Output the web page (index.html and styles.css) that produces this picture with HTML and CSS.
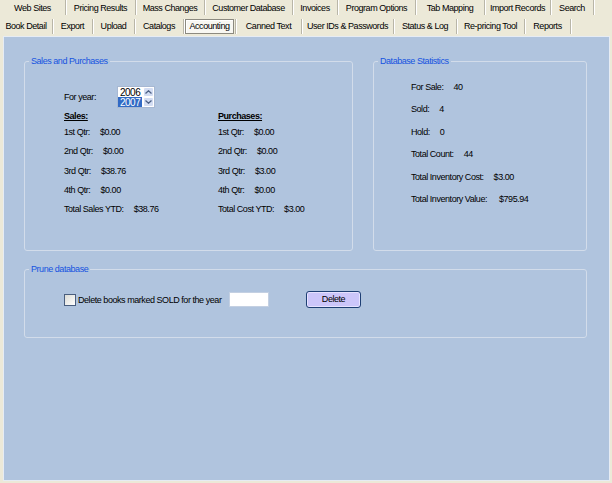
FILE: index.html
```html
<!DOCTYPE html>
<html>
<head>
<meta charset="utf-8">
<link rel="stylesheet" href="styles.css">
</head>
<body>
<div class="app">
  <div class="tabs">
    <div class="tabrow row1">
      <div class="tab w66">Web Sites</div>
      <div class="tab w70">Pricing Results</div>
      <div class="tab w69">Mass Changes</div>
      <div class="tab w88">Customer Database</div>
      <div class="tab w45">Invoices</div>
      <div class="tab w78">Program Options</div>
      <div class="tab w69">Tab Mapping</div>
      <div class="tab w66">Import Records</div>
      <div class="tab w43">Search</div>
    </div>
    <div class="tabrow row2">
      <div class="tab w53">Book Detail</div>
      <div class="tab w40">Export</div>
      <div class="tab w42">Upload</div>
      <div class="tab w49">Catalogs</div>
      <div class="tab w52 selected"><span class="selbox">Accounting</span></div>
      <div class="tab w66">Canned Text</div>
      <div class="tab w92">User IDs &amp; Passwords</div>
      <div class="tab w63">Status &amp; Log</div>
      <div class="tab w68">Re-pricing Tool</div>
      <div class="tab w46">Reports</div>
    </div>
  </div>
  <div class="panel">
    <div class="toprow">
      <fieldset class="group sales">
        <legend>Sales and Purchases</legend>
        <div class="inner sales-inner">
          <div class="yearrow">
            <span class="yearlabel">For year:</span>
            <div class="spin">
              <div class="spinlist">
                <div class="item">2006</div>
                <div class="item sel">2007</div>
              </div>
              <div class="spinbtns">
                <div class="sbtn"><svg width="7" height="4" viewBox="0 0 7 4"><path d="M0.5 3.5 L3.5 0.8 L6.5 3.5" fill="none" stroke="#4d6185" stroke-width="1.3"/></svg></div>
                <div class="sbtn"><svg width="7" height="4" viewBox="0 0 7 4"><path d="M0.5 0.5 L3.5 3.2 L6.5 0.5" fill="none" stroke="#4d6185" stroke-width="1.3"/></svg></div>
              </div>
            </div>
          </div>
          <div class="cols">
            <div class="col">
              <div class="head">Sales:</div>
              <div class="line">1st Qtr:<span class="val">$0.00</span></div>
              <div class="line">2nd Qtr:<span class="val">$0.00</span></div>
              <div class="line">3rd Qtr:<span class="val">$38.76</span></div>
              <div class="line">4th Qtr:<span class="val">$0.00</span></div>
              <div class="line">Total Sales YTD:<span class="val">$38.76</span></div>
            </div>
            <div class="col">
              <div class="head">Purchases:</div>
              <div class="line">1st Qtr:<span class="val">$0.00</span></div>
              <div class="line">2nd Qtr:<span class="val">$0.00</span></div>
              <div class="line">3rd Qtr:<span class="val">$3.00</span></div>
              <div class="line">4th Qtr:<span class="val">$0.00</span></div>
              <div class="line">Total Cost YTD:<span class="val">$3.00</span></div>
            </div>
          </div>
        </div>
      </fieldset>
      <fieldset class="group stats">
        <legend>Database Statistics</legend>
        <div class="inner statlist">
          <div class="line">For Sale:<span class="val">40</span></div>
          <div class="line">Sold:<span class="val">4</span></div>
          <div class="line">Hold:<span class="val">0</span></div>
          <div class="line">Total Count:<span class="val">44</span></div>
          <div class="line">Total Inventory Cost:<span class="val">$3.00</span></div>
          <div class="line">Total Inventory Value:<span class="val wide">$795.94</span></div>
        </div>
      </fieldset>
    </div>
    <fieldset class="group prune">
      <legend>Prune database</legend>
      <div class="inner prunerow">
        <label class="chk"><span class="box"></span>Delete books marked SOLD for the year</label>
        <span class="yearinput"></span>
        <span class="btn">Delete</span>
      </div>
    </fieldset>
  </div>
</div>
</body>
</html>
```
FILE: styles.css
```css
html, body {
  margin: 0;
  padding: 0;
}
body {
  background: #ECE9D8;
  font-family: "Liberation Sans", Arial, sans-serif;
  font-size: 9px;
  letter-spacing: -0.45px;
  color: #000;
  width: 612px;
  height: 483px;
  overflow: hidden;
}
.app {
  width: 612px;
  height: 483px;
}
.tabs {
  height: 36px;
}
.tabrow {
  display: flex;
}
.row1 {
  height: 17px;
}
.row2 {
  height: 19px;
}
.tab {
  box-sizing: border-box;
  height: 15px;
  line-height: 15px;
  text-align: center;
  white-space: nowrap;
  border-right: 1px solid #B9B6A8;
  box-shadow: 1px 0 0 #FFFFFF;
}
.row1 .tab {
  line-height: 16px;
}
.row2 .tab {
  margin-top: 2px;
}
.tab.selected {
  display: flex;
  padding-left: 1px;
}
.selbox {
  box-sizing: border-box;
  width: 49px;
  height: 15px;
  line-height: 13px;
  border: 1px solid #8C8A80;
  background: #F8F7F2;
  box-shadow: inset 1px 1px 0 #FFFFFF;
}
.w40 { width: 40px; }
.w42 { width: 42px; }
.w43 { width: 43px; }
.w45 { width: 45px; }
.w46 { width: 46px; }
.w49 { width: 49px; }
.w52 { width: 52px; }
.w53 { width: 53px; }
.w63 { width: 63px; }
.w66 { width: 66px; }
.w68 { width: 68px; }
.w69 { width: 69px; }
.w70 { width: 70px; }
.w78 { width: 78px; }
.w88 { width: 88px; }
.w92 { width: 92px; }

.panel {
  box-sizing: border-box;
  margin-left: 3px;
  width: 607px;
  height: 445px;
  background: #B0C4DE;
  border: 1px solid #E6ECF4;
  padding: 18px 0 0 20px;
}
.toprow {
  display: flex;
  gap: 20px;
}
.group {
  box-sizing: border-box;
  margin: 0;
  padding: 0;
  border: 1px solid #D2DCEA;
  border-radius: 3px;
  min-width: 0;
}
.group legend {
  color: #1553E0;
  padding: 0 2px;
  margin-left: 4px;
  line-height: 13px;
}
.sales {
  width: 329px;
  height: 196px;
}
.sales-inner {
  padding-left: 39px;
}
.stats {
  width: 214px;
  height: 196px;
}
.yearrow {
  display: flex;
  align-items: center;
  margin-top: 18px;
  height: 22px;
}
.yearlabel {
  width: 53px;
}
.spin {
  box-sizing: border-box;
  display: flex;
  width: 38px;
  height: 22px;
  border: 1px solid #A7B8D2;
  background: #FFFFFF;
}
.spinlist {
  width: 24px;
}
.item {
  height: 10px;
  line-height: 11px;
  font-size: 10px;
  letter-spacing: -0.5px;
  padding-left: 2px;
}
.item.sel {
  background: #316AC5;
  color: #FFFFFF;
}
.spinbtns {
  display: flex;
  flex-direction: column;
  margin-left: 1px;
}
.sbtn {
  box-sizing: border-box;
  width: 11px;
  height: 10px;
  background: #D3DDF3;
  border: 1px solid #FFFFFF;
  border-radius: 2px;
  display: flex;
  align-items: center;
  justify-content: center;
}
.cols {
  display: grid;
  grid-template-columns: 154px auto;
  margin-top: 2px;
}
.col {
  display: flex;
  flex-direction: column;
  gap: 6.2px;
}
.head {
  font-weight: bold;
  text-decoration: underline;
  line-height: 13px;
  margin-bottom: -3px;
}
.line {
  line-height: 13px;
  white-space: nowrap;
}
.val {
  margin-left: 10px;
}
.val.wide {
  margin-left: 12px;
}
.statlist {
  display: flex;
  flex-direction: column;
  gap: 9.4px;
  margin-top: 13px;
  padding-left: 37px;
}
.prune {
  width: 563px;
  height: 75px;
  margin-top: 12px;
}
.prunerow {
  display: flex;
  align-items: center;
  margin-top: 15px;
  height: 17px;
  padding-left: 39px;
}
.chk {
  display: flex;
  align-items: center;
  width: 165px;
  white-space: nowrap;
}
.box {
  box-sizing: border-box;
  flex: none;
  width: 12px;
  height: 12px;
  border: 1px solid #4A5E7E;
  background: linear-gradient(135deg, #DCDCD6, #FFFFFF);
  margin-right: 2px;
}
.yearinput {
  box-sizing: border-box;
  width: 40px;
  height: 15px;
  background: #FFFFFF;
  border: 1px solid #C4D0E2;
}
.btn {
  box-sizing: border-box;
  width: 55px;
  height: 17px;
  margin-left: 37px;
  line-height: 15px;
  text-align: center;
  background: #CCC6FA;
  border: 1px solid #1E3F74;
  border-radius: 3px;
  box-shadow: inset 0 0 0 1px #E6E2FF;
}
```
